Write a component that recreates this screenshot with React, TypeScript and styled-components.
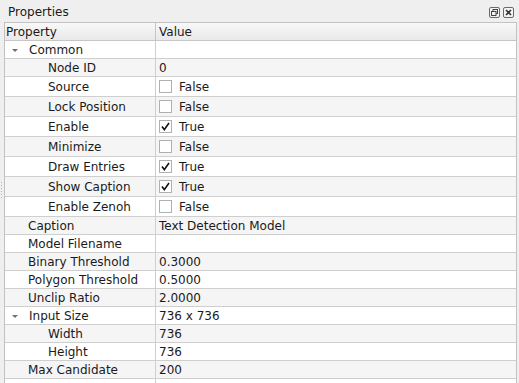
import React from 'react'
import styled, { createGlobalStyle } from 'styled-components'

const GlobalStyle = createGlobalStyle`
  html, body {
    margin: 0;
    padding: 0;
    background: #efefef;
  }
  body {
    font-family: "DejaVu Sans", "Liberation Sans", sans-serif;
    font-size: 12px;
    color: #1a1a1a;
  }
`

const Dock = styled.div`
  width: 519px;
  height: 383px;
  overflow: hidden;
  position: relative;
  display: flex;
  flex-direction: column;
  background: #efefef;
`

const TitleBar = styled.div`
  height: 22px;
  display: flex;
  align-items: center;
  justify-content: space-between;
  padding: 0 5px 0 8px;
  box-sizing: border-box;
`

const Title = styled.span`
  font-size: 12px;
  line-height: 22px;
  padding-top: 1px;
`

const TitleButtons = styled.div`
  display: flex;
  gap: 3px;
  padding-top: 3px;
`

const DockButton = styled.svg`
  width: 11px;
  height: 11px;
  display: block;
`

const Grip = styled.div`
  position: absolute;
  left: 1px;
  top: 182px;
  display: flex;
  flex-direction: column;
  gap: 2px;
  & > span {
    width: 1px;
    height: 1px;
    background: #b4b4b4;
  }
`

const Tree = styled.div`
  margin-left: 4px;
  width: 513px;
  border: 1px solid #c2c2c2;
  border-bottom: none;
  background: #ffffff;
  box-sizing: border-box;
  flex: 1;
`

const Row = styled.div<{ $h: number; $alt?: boolean }>`
  display: grid;
  grid-template-columns: 151px 1fr;
  height: ${p => p.$h}px;
  box-sizing: border-box;
  border-bottom: 1px solid #cfcfcf;
  background: ${p => (p.$alt ? '#f5f5f5' : '#ffffff')};
`

const Header = styled(Row)`
  background: linear-gradient(#f8f8f8, #e9e9e9);
  border-bottom: 1px solid #c6c6c6;
`

const Cell = styled.div<{ $indent?: number }>`
  display: flex;
  align-items: center;
  padding-left: ${p => p.$indent ?? 0}px;
  white-space: nowrap;
  overflow: hidden;
  &:first-child {
    border-right: 1px solid #cfcfcf;
  }
`

const HeadCell = styled(Cell)`
  padding-left: 1px;
  &:first-child {
    border-right: 1px solid #c6c6c6;
  }
  & + & {
    padding-left: 3px;
  }
`

const Arrow = styled.span`
  width: 0;
  height: 0;
  border-left: 3px solid transparent;
  border-right: 3px solid transparent;
  border-top: 3px solid #707070;
  margin: 1px 11px 0 7px;
`

const ValueText = styled.span<{ $flush?: boolean }>`
  padding-left: ${p => (p.$flush ? 0 : 3)}px;
`

const Check = styled.span`
  width: 13px;
  height: 13px;
  box-sizing: border-box;
  border: 1px solid #b0b0b0;
  background: #fff;
  margin-left: 3px;
  margin-right: 7px;
  display: flex;
  align-items: center;
  justify-content: center;
`

type Prop = {
  name: string
  value?: string
  level: number
  group?: boolean
  check?: boolean
}

const props: Prop[] = [
  { name: 'Common', level: 0, group: true },
  { name: 'Node ID', value: '0', level: 1 },
  { name: 'Source', value: 'False', level: 1, check: false },
  { name: 'Lock Position', value: 'False', level: 1, check: false },
  { name: 'Enable', value: 'True', level: 1, check: true },
  { name: 'Minimize', value: 'False', level: 1, check: false },
  { name: 'Draw Entries', value: 'True', level: 1, check: true },
  { name: 'Show Caption', value: 'True', level: 1, check: true },
  { name: 'Enable Zenoh', value: 'False', level: 1, check: false },
  { name: 'Caption', value: 'Text Detection Model', level: 0 },
  { name: 'Model Filename', value: '', level: 0 },
  { name: 'Binary Threshold', value: '0.3000', level: 0 },
  { name: 'Polygon Threshold', value: '0.5000', level: 0 },
  { name: 'Unclip Ratio', value: '2.0000', level: 0 },
  { name: 'Input Size', value: '736 x 736', level: 0, group: true },
  { name: 'Width', value: '736', level: 1 },
  { name: 'Height', value: '736', level: 1 },
  { name: 'Max Candidate', value: '200', level: 0 },
  { name: '', value: '', level: 0 },
]

const CheckMark = () => (
  <svg width="9" height="9" viewBox="0 0 9 9">
    <path d="M1 4.6 L3.3 7.6 L8 1" fill="none" stroke="#111" strokeWidth="1.6" />
  </svg>
)

const App = () => (
  <Dock>
    <GlobalStyle />
    <TitleBar>
      <Title>Properties</Title>
      <TitleButtons>
        <DockButton viewBox="0 0 11 11">
          <rect x="0.5" y="0.5" width="10" height="10" rx="1.5" fill="#f4f4f4" stroke="#6a6a6a" />
          <rect x="4" y="2.5" width="4.5" height="4" fill="none" stroke="#444" />
          <rect x="2.5" y="4.5" width="4.5" height="4" fill="#f4f4f4" stroke="#444" />
        </DockButton>
        <DockButton viewBox="0 0 11 11">
          <rect x="0.5" y="0.5" width="10" height="10" rx="1.5" fill="#f4f4f4" stroke="#6a6a6a" />
          <path d="M3 3 L8 8 M8 3 L3 8" stroke="#333" strokeWidth="1.6" />
        </DockButton>
      </TitleButtons>
    </TitleBar>
    <Grip>
      {[0, 1, 2, 3, 4, 5].map(i => (
        <span key={i} />
      ))}
    </Grip>
    <Tree>
      <Header $h={18}>
        <HeadCell>Property</HeadCell>
        <HeadCell>Value</HeadCell>
      </Header>
      {props.map((p, i) => (
        <Row key={i} $h={p.check !== undefined ? 20 : 18} $alt={i % 2 === 1}>
          <Cell $indent={p.group ? 0 : 23 + p.level * 20}>
            {p.group && <Arrow />}
            {p.name}
          </Cell>
          <Cell>
            {p.check !== undefined && <Check>{p.check && <CheckMark />}</Check>}
            <ValueText $flush={p.check !== undefined}>{p.value}</ValueText>
          </Cell>
        </Row>
      ))}
    </Tree>
  </Dock>
)

export default App
